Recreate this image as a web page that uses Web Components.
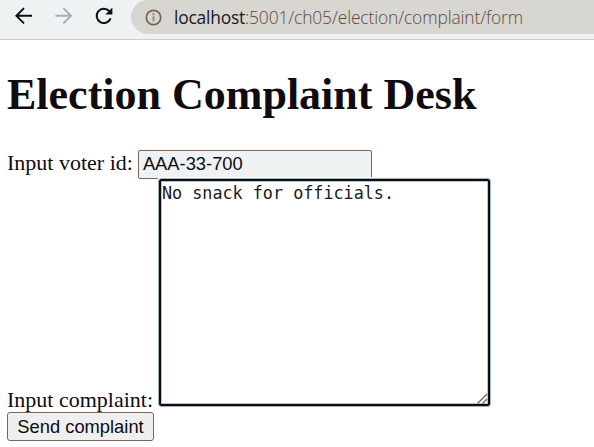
<!DOCTYPE html>
<html lang="en"><head><meta charset="utf-8"><title>Election Complaint Desk</title>
<style>
html,body{margin:0;background:#fff;overflow:hidden}
body{height:447px}
</style></head><body>
<complaint-page></complaint-page>
<script>
function define(name, html){
  const t=document.createElement('template'); t.innerHTML=html;
  customElements.define(name, class extends HTMLElement{
    constructor(){super();this.attachShadow({mode:'open'}).append(t.content.cloneNode(true));}
  });
}
define('address-bar',`<style>
:host{display:flex;flex:1;align-items:center;height:34px;box-sizing:border-box;padding-left:14px;border-radius:17px 0 0 17px;background:#d8d6d1;color:#5f4a42;white-space:nowrap}
svg{flex:none;margin-right:12px}
.url{font:300 17.4px/33px "Open Sans","Noto Sans",sans-serif;letter-spacing:-.13px}
::slotted(b){font-weight:400;color:#1b1820;letter-spacing:-.2px}
</style><svg width="17" height="17" viewBox="0 0 17 17"><circle cx="8.5" cy="8.5" r="7.2" fill="none" stroke="#7d6052" stroke-width="1.7"/><path d="M8.5 4.2v2M8.5 7.3v5.2" stroke="#7e92a2" stroke-width="2"/></svg><span class="url"><slot></slot></span>`);
define('browser-bar',`<style>
:host{display:flex;box-sizing:border-box;height:40px;border-bottom:1px solid #c9cfcf;background:#eef2f3;overflow:hidden}
nav{display:flex;align-items:center;width:131px;height:32px;box-sizing:border-box;padding-left:14px;gap:20px}
svg{flex:none}
</style><nav>
<svg width="20" height="20" viewBox="0 0 20 20" fill="none" stroke="#100b10" stroke-width="1.9"><path d="M18 9.8H2.4M10 2.2 2.4 9.8 10 17.4"/></svg>
<svg width="20" height="20" viewBox="0 0 20 20" fill="none" stroke="#9db0be" stroke-width="1.9"><path d="M1.5 9.8H17M9.4 2.2 17 9.8 9.4 17.4"/></svg>
<svg width="20" height="20" viewBox="0 0 20 20" fill="none" stroke="#100b10" stroke-width="2"><path d="M16.6 12.4A7.2 7.2 0 1 1 15.2 5"/><path d="M18.4 1.5V8.5H11.4Z" fill="#100b10" stroke="none"/></svg>
</nav><address-bar><b>localhost</b>:5001/ch05/election/complaint/form</address-bar>`);
define('text-input',`<style>
:host{display:block;box-sizing:border-box;width:234px;height:29px;padding-left:4px;border:1px solid #856350;border-radius:2px;background:#eef2f3;color:#100b10;font:18.33px/26px "Liberation Sans",sans-serif}
</style><slot></slot>`);
define('text-area',`<style>
:host{display:flex;position:relative;box-sizing:border-box;width:333px;height:229px;padding:3px 2px 3px 3px;border:1px solid #9fb4bf;border-radius:3px;box-shadow:inset 0 0 0 2px #100b10,inset 0 0 0 3px #b4c5cd,0 0 0 1px #fff;background:#fff;color:#1c191e;font:16.75px/22px "DejaVu Sans Mono",monospace}
svg{position:absolute;right:2px;bottom:2px}
</style><slot></slot><svg width="11" height="11" viewBox="0 0 11 11" fill="none" stroke="#856350" stroke-width="1.4"><path d="M.5 10.5 10 1M5.5 10.5 10 6"/></svg>`);
define('push-button',`<style>
:host{display:block;box-sizing:border-box;width:147px;height:29px;border:1px solid #856350;border-radius:3px;background:#eef0f0;color:#100b10;text-align:center;font:18.33px/27px "Liberation Sans",sans-serif}
</style><slot></slot>`);
define('form-row',`<style>
:host{display:flex;align-items:flex-end;gap:5px}
span{line-height:var(--label-line,33px);white-space:nowrap}
</style><span><slot name="label"></slot></span><slot></slot>`);
define('complaint-page',`<style>
:host{display:block;color:#100b10;font:22px "Liberation Serif",serif}
main{padding:29px 7px 0}
h1{margin:0 0 27px;font-size:44px;line-height:52px;font-weight:700}
.voter{height:31px;align-items:flex-end}
.area{margin-top:-1px;--label-line:15px}
push-button{margin-top:5px}
</style><browser-bar></browser-bar><main><h1>Election Complaint Desk</h1>
<form-row class="voter"><span slot="label">Input voter id:</span><text-input>AAA-33-700</text-input></form-row>
<form-row class="area"><span slot="label">Input complaint:</span><text-area>No snack for officials.</text-area></form-row>
<push-button>Send complaint</push-button></main>`);
</script></body></html>
